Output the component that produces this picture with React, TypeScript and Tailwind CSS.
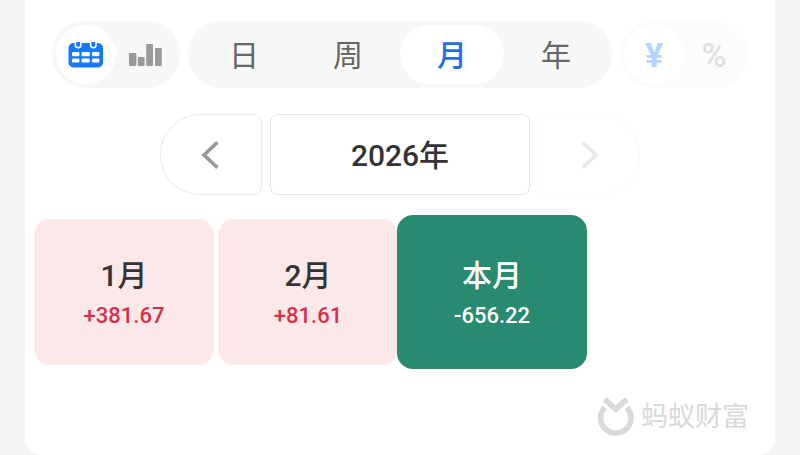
import React, { useState } from "react";

const periods = ["日", "周", "月", "年"];

const months = [
  { label: "1月", amount: "+381.67" },
  { label: "2月", amount: "+81.61" },
  { label: "本月", amount: "-656.22" },
];

const CalendarIcon = () => (
  <svg width="36" height="26" viewBox="0 0 36 26" aria-hidden="true">
    <rect x="0.5" y="1" width="34.5" height="24.5" rx="5" fill="currentColor" />
    <path d="M7.4 -1v4a2.7 2.7 0 0 0 5.4 0v-4M22.6 -1v4a2.7 2.7 0 0 0 5.4 0v-4" fill="currentColor" stroke="#fff" strokeWidth="1.6" />
    <g fill="#fff">
      <rect x="4" y="10" width="7.4" height="4.2" rx="1" />
      <rect x="13.6" y="10" width="8.2" height="4.2" rx="1" />
      <rect x="24" y="10" width="7.4" height="4.2" rx="1" />
      <rect x="4" y="16.4" width="7.4" height="4.2" rx="1" />
      <rect x="13.6" y="16.4" width="8.2" height="4.2" rx="1" />
      <rect x="24" y="16.4" width="7.4" height="4.2" rx="1" />
    </g>
  </svg>
);

const BarsIcon = () => (
  <svg width="34" height="22" viewBox="0 0 34 22" fill="currentColor" aria-hidden="true">
    <rect x="0" y="9" width="7.4" height="13" rx="1" />
    <rect x="8.8" y="13" width="6.8" height="9" rx="1" />
    <rect x="17.2" y="0" width="6.8" height="22" rx="1" />
    <rect x="26" y="4" width="6.8" height="18" rx="1" />
  </svg>
);

const FortuneLogo = () => (
  <svg width="40" height="40" viewBox="0 0 40 40" fill="none" stroke="currentColor" strokeWidth="5.6" aria-hidden="true">
    <path d="M7.8 10.5A15.2 15.2 0 1 0 29.8 10.5" />
    <path d="M7.8 2.4L18.8 12.2L29.8 2.4" />
  </svg>
);

const App = () => {
  const [view, setView] = useState("calendar");
  const [period, setPeriod] = useState("月");
  const [selected, setSelected] = useState("本月");

  return (
    <div className="min-h-screen bg-[#f4f4f4] px-[25px] font-['Roboto','Noto_Sans_CJK_SC',sans-serif]">
      <main className="rounded-b-2xl bg-white pt-[21px]">
        <div className="grid grid-cols-[128px_1fr_128px] gap-2 px-[27px]">
          <div className="grid grid-cols-2 rounded-full bg-[#f7f7f7] p-1">
            <button
              type="button"
              aria-label="日历"
              onClick={() => setView("calendar")}
              className={`flex h-[59px] items-center justify-center rounded-full ${view === "calendar" ? "bg-white text-[#1677ff]" : "text-[#999]"}`}
            >
              <CalendarIcon />
            </button>
            <button
              type="button"
              aria-label="柱状图"
              onClick={() => setView("bars")}
              className={`flex h-[59px] items-center justify-center rounded-full ${view === "bars" ? "bg-white text-[#1677ff]" : "text-[#999]"}`}
            >
              <BarsIcon />
            </button>
          </div>

          <div className="grid grid-cols-4 rounded-full bg-[#f7f7f7] p-1">
            {periods.map((item) => (
              <button
                key={item}
                type="button"
                onClick={() => setPeriod(item)}
                className={`h-[59px] rounded-full pt-0.5 text-[30px] leading-10 ${period === item ? "bg-white font-medium text-[#1f6fe5]" : "text-[#666]"}`}
              >
                {item}
              </button>
            ))}
          </div>

          <div className="grid grid-cols-2 rounded-full bg-[#fcfcfc] p-1 text-[34px] leading-10">
            <button type="button" disabled className="h-[59px] rounded-full bg-white font-bold text-[#b5d4ff]">
              ¥
            </button>
            <button type="button" disabled className="h-[59px] rounded-full font-medium text-[#e0e0e0]">
              %
            </button>
          </div>
        </div>

        <div className="mt-[26px] flex justify-center gap-2">
          <button
            type="button"
            aria-label="上一年"
            className="flex h-[81px] w-[102px] items-center justify-center rounded-l-[40px] rounded-r-lg border border-[#ebebeb] text-[#999]"
          >
            <svg width="20" height="28" viewBox="0 0 20 28" fill="none" stroke="currentColor" strokeWidth="3.6" aria-hidden="true">
              <path d="M16.4 1.4L3 14L16.4 26.6" />
            </svg>
          </button>
          <button
            type="button"
            className="h-[81px] w-[260px] rounded-lg border border-[#e5e5e5] pt-0.5 text-[30px] leading-10 font-medium text-[#333]"
          >
            2026年
          </button>
          <button
            type="button"
            aria-label="下一年"
            disabled
            className="flex h-[81px] w-[102px] items-center justify-center rounded-l-lg rounded-r-[40px] border border-[#fafafa] text-[#e8e8e8]"
          >
            <svg width="20" height="28" viewBox="0 0 20 28" fill="none" stroke="currentColor" strokeWidth="3.6" aria-hidden="true">
              <path d="M3.6 1.4L17 14L3.6 26.6" />
            </svg>
          </button>
        </div>

        <div className="mt-6 grid grid-cols-4 gap-1 px-[9px]">
          {months.map((month) => (
            <button
              key={month.label}
              type="button"
              onClick={() => setSelected(month.label)}
              className={`flex min-h-[146px] flex-col items-center justify-center rounded-2xl pt-2 font-medium ${
                selected === month.label ? "-mx-[5px] -my-1 bg-[#288a70] text-white" : "bg-[#fbe9ea] text-[#333]"
              }`}
            >
              <span className="text-[30px] leading-10">{month.label}</span>
              <span className={`text-[22px] leading-10 ${selected === month.label ? "text-white" : "text-[#d9304a]"}`}>
                {month.amount}
              </span>
            </button>
          ))}
        </div>

        <footer className="mt-8 flex items-center justify-end gap-1 pr-[26px] pb-[18px] text-[#d9d9d9]">
          <FortuneLogo />
          <span className="text-[27px] leading-10">蚂蚁财富</span>
        </footer>
      </main>
    </div>
  );
};

export default App;
